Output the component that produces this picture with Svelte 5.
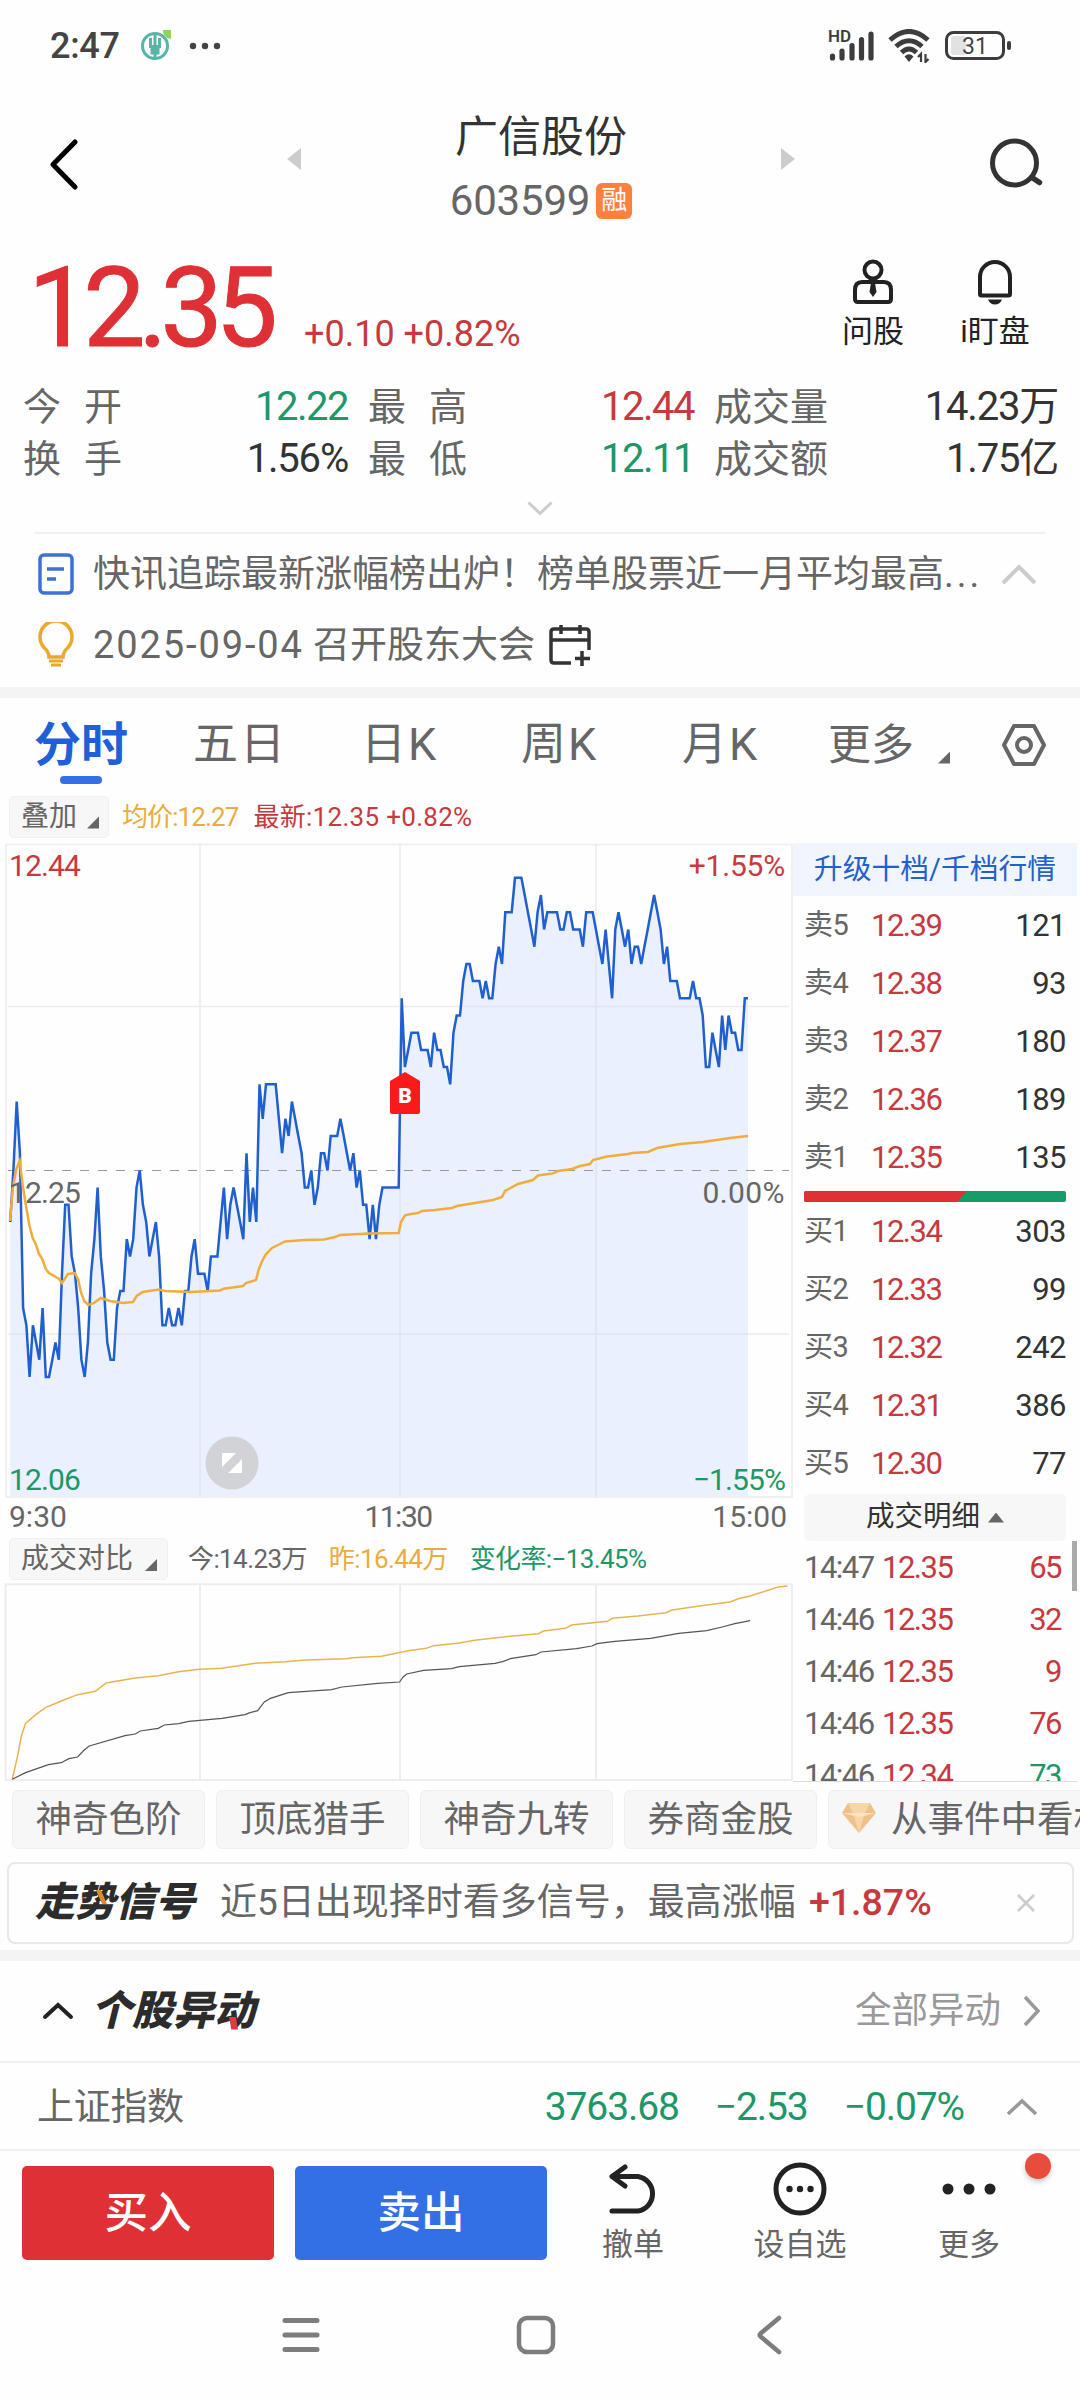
<script lang="ts">
  type Level = { name: string; price: string; volume: number };
  type Deal = { time: string; price: string; volume: number; down?: boolean };

  const tabs = ['分时', '五日', '日K', '周K', '月K'];
  let activeTab = $state('分时');

  const quotes = [
    { label: '今开', value: '12.22', tone: 'green' },
    { label: '最高', value: '12.44', tone: 'red' },
    { label: '成交量', value: '14.23万', tone: 'dark' },
    { label: '换手', value: '1.56%', tone: 'dark' },
    { label: '最低', value: '12.11', tone: 'green' },
    { label: '成交额', value: '1.75亿', tone: 'dark' }
  ];

  const asks: Level[] = [
    { name: '卖5', price: '12.39', volume: 121 },
    { name: '卖4', price: '12.38', volume: 93 },
    { name: '卖3', price: '12.37', volume: 180 },
    { name: '卖2', price: '12.36', volume: 189 },
    { name: '卖1', price: '12.35', volume: 135 }
  ];

  const bids: Level[] = [
    { name: '买1', price: '12.34', volume: 303 },
    { name: '买2', price: '12.33', volume: 99 },
    { name: '买3', price: '12.32', volume: 242 },
    { name: '买4', price: '12.31', volume: 386 },
    { name: '买5', price: '12.30', volume: 77 }
  ];

  const deals: Deal[] = [
    { time: '14:47', price: '12.35', volume: 65 },
    { time: '14:46', price: '12.35', volume: 32 },
    { time: '14:46', price: '12.35', volume: 9 },
    { time: '14:46', price: '12.35', volume: 76 },
    { time: '14:46', price: '12.34', volume: 73, down: true }
  ];

  const tools = ['神奇色阶', '顶底猎手', '神奇九转', '券商金股'];

  // minute prices as cents away from the previous close (12.25)
  const morning = [
    -3, 0, 4, 1, -8, -9, -12, -9, -10, -11, -8, -12, -12, -11, -10, -11, -6, -2, -2, -5,
    -6, -8, -11, -12, -10, -6, -4, -1, -5, -7, -10, -11, -11, -8, -7, -7, -4, -5, -4, -1,
    0, -2, -3, -5, -4, -3, -5, -9, -9, -8, -9, -9, -8, -9, -7, -7, -5, -4, -6, -6,
    -6, -7, -5, -5, -5, -3, -1, -4, -2, -1, -2, -3, -4, 1, -3, -1, -3, 5, 3, 5,
    5, 5, 5, 3, 1, 3, 2, 4, 3, 2, 1, -1, -1, 0, -2, -1, 1, 1, 0, 2,
    2, 2, 3, 2, 1, 0, 1, -1, 0, -2, -2, -4, -2, -4, -2, -1, -1, -1, -1, -1, -1
  ];
  const afternoon = [
    10, 6, 7, 8, 8, 8, 7, 7, 7, 6, 8, 7, 7, 6, 6, 5, 8, 9, 9, 11,
    12, 12, 11, 11, 11, 10, 11, 10, 10, 12, 13, 12, 15, 15, 15, 17, 17, 17, 16, 15,
    14, 13, 15, 16, 14, 15, 15, 15, 15, 14, 14, 15, 15, 14, 14, 14, 13, 15, 15, 15,
    14, 13, 12, 14, 12, 10, 14, 15, 14, 13, 14, 12, 13, 13, 12, 13, 14, 15, 16, 15,
    14, 12, 13, 11, 11, 11, 10, 10, 10, 10, 11, 10, 10, 9, 6, 6, 8, 7, 6, 9,
    7, 9, 8, 8, 7, 7, 10, 10
  ];

  function place(values: number[], from: number, to: number) {
    const step = (to - from) / (values.length - 1);
    return values.map((v, i) => `${(from + i * step).toFixed(1)},${(327.4 - v * 17.21).toFixed(1)}`);
  }

  const priceLine = [...place(morning, 10.2, 398.7), ...place(afternoon, 401.7, 748)].join(' ');
  const priceArea = `10.2,654 ${priceLine} 748,654`;

  const averageLine =
    '10,378 12.7,346 16,327 19.7,318 22.7,342 26,363 29.3,382 32.7,395 35.7,401 39,411 42.3,416 45.7,426 49,430 55,433.5 59,436 62,440 68,431 74.7,430 78,436 81,449.5 84.3,458 88.3,462 94,460 100.7,455 110,458 123,460 133,459 136.7,453 142.7,449 159,446.5 165,448 191,449 220,447.4 223.7,445.7 243,443 246,440 256,437 259,425.5 262.7,417 265.7,411.6 272,405 279,401.5 285,398.5 305,397 324,396.4 334,394.3 340,392 369,390.5 398.7,390 401,379 405,372.4 411,371 418,370 422,368 435,367 452,365 457,363 493,357 502,354 505,348 518,341 533,337 538,332.5 553,330.4 558,328 572,326 580,323 590,321 593,317 607,313.5 628,311 632,310 648,309 657,305 680,301 703,299 730,295 748,293';

  const yesterdayVolume =
    '24,900 33,840 42,770 50,732 70,706 90,684 120,665 152,646 187,636 208,611 265,596 310,589 350,577 390,570 435,567 500,552 560,547 600,542 680,538 690,535 748,531 800,514 835,507 850,499 900,491 930,483 1000,471 1055,463 1065,455 1108,447 1120,437 1190,426 1200,417 1250,410 1305,400 1315,393 1370,380 1430,368 1450,357 1470,350 1525,323 1543,320';
  const todayVolume =
    '24,900 50,880 95,856 120,850 135,838 152,833 165,812 175,800 245,769 265,764 275,755 310,747 322,737 350,733 370,726 435,717 480,706 490,700 505,694 518,668 530,657 565,640 650,631 670,623 740,612 783,608 790,593 797,584 830,573 885,568 900,562 970,552 985,547 1000,538 1050,526 1060,518 1130,508 1160,500 1170,493 1205,486 1275,477 1330,462 1385,454 1415,443 1440,433 1470,424';
</script>

<div class="screen">
  <header class="status">
    <span class="clock">2:47</span>
    <svg class="app-mark" width="32" height="34" viewBox="0 0 32 34" fill="none">
      <circle cx="14" cy="19" r="12.500" stroke="#56b5a8" stroke-width="3" />
      <path d="M14 8v23M9.500 11v8.500h9V11M9.500 24.500h9M11 20v6h6v-6" stroke="#56b5a8" stroke-width="3" />
      <path d="M22 3h8v9q-8-1-8-9z" fill="#8bd455" />
    </svg>
    <svg width="32" height="8" viewBox="0 0 32 8" fill="#444">
      <circle cx="4" cy="4" r="3.200" /><circle cx="16" cy="4" r="3.200" /><circle cx="28" cy="4" r="3.200" />
    </svg>
    <div class="signals">
      <div class="cell">
        <span class="hd">HD</span>
        <svg width="47" height="32" viewBox="0 0 47 32" stroke="#3d3d3d" stroke-width="5.200" stroke-linecap="round">
          <path d="M4.500 28v-2M14 28v-7M24 28V15.500M33.500 28V9.500M43 28V4" />
        </svg>
      </div>
      <svg width="44" height="34" viewBox="0 0 44 34" fill="none" stroke="#3d3d3d" stroke-width="5">
        <path d="M2 11Q21-6 40 11M8 17.500Q21 6 34 17.500M13.500 23.500Q21 16.500 28.500 23.500" />
        <path d="M16.500 27.500Q21 23 25.500 27.500L21 33z" fill="#3d3d3d" stroke="none" />
        <path d="M33 33v-8l-3 3M37.500 25v8l3-3" stroke-width="2.200" />
      </svg>
      <svg width="68" height="30" viewBox="0 0 68 30" fill="none">
        <rect x="6" y="5" width="15" height="19" rx="3" fill="#e2e2e2" />
        <rect x="1.500" y="1.500" width="57" height="26" rx="7" stroke="#3d3d3d" stroke-width="3" />
        <rect x="62" y="10" width="4" height="9" rx="2" fill="#3d3d3d" />
        <text x="30" y="22.800" text-anchor="middle" class="battery-text">31</text>
      </svg>
    </div>
  </header>

  <nav class="topbar">
    <svg class="back" width="30" height="52" viewBox="0 0 30 52" fill="none" stroke="#000" stroke-width="5" stroke-linecap="round" stroke-linejoin="round">
      <path d="M26 4L4 26.500 26 49" />
    </svg>
    <svg class="prev" width="14" height="22" viewBox="0 0 14 22"><path d="M0 11L14 0v22z" fill="#ccc" /></svg>
    <div class="title">
      <h1>广信股份</h1>
      <div class="code">603599<span class="badge">融</span></div>
    </div>
    <svg class="next" width="14" height="22" viewBox="0 0 14 22"><path d="M14 11L0 0v22z" fill="#ccc" /></svg>
    <svg class="search" width="54" height="50" viewBox="0 0 54 50" fill="none" stroke="#333" stroke-width="5" stroke-linecap="round">
      <circle cx="25.500" cy="25" r="22" />
      <path d="M43 39.500l7.500 5" stroke-width="5.500" />
    </svg>
  </nav>

  <section class="headline">
    <span class="price">12.35</span>
    <span class="change">+0.10 +0.82%</span>
    <div class="action ask">
      <svg width="42" height="46" viewBox="0 0 42 46" fill="none" stroke="#222" stroke-width="4">
        <circle cx="21" cy="11" r="8.500" />
        <path d="M10 23h22q7 0 7 8v9q0 3-3 3H6q-3 0-3-3v-9q0-8 7-8z" />
        <path d="M19 24h4l1.500 9-3.500 5-3.500-5z" fill="#222" stroke="none" />
      </svg>
      <span>问股</span>
    </div>
    <div class="action watch">
      <svg width="42" height="46" viewBox="0 0 42 46" fill="none" stroke="#222" stroke-width="4">
        <path d="M6 35V18a15 15 0 0 1 30 0v17q0 1.500-1.500 1.500h-27Q6 36.500 6 35z" />
        <path d="M14 40.500h14q-2 5-7 5t-7-5z" fill="#222" stroke="none" />
      </svg>
      <span>i盯盘</span>
    </div>
  </section>

  <section class="quotes">
    {#each quotes as quote}
      <div class="quote">
        <span class="label" class:wide={quote.label.length === 2}>{quote.label}</span>
        <span class={quote.tone}>{quote.value}</span>
      </div>
    {/each}
  </section>

  <div class="expand">
    <svg width="26" height="15" viewBox="0 0 26 15" fill="none" stroke="#ccc" stroke-width="3"><path d="M1.500 1.500L13 12.500 24.500 1.500" /></svg>
  </div>

  <section class="news">
    <div class="news-row">
      <svg width="36" height="42" viewBox="0 0 36 42" fill="none" stroke="#3d70dc" stroke-width="3.500">
        <rect x="2" y="2" width="32" height="38" rx="4" />
        <path d="M9 16h17M9 26h9" />
      </svg>
      <p>快讯追踪最新涨幅榜出炉！榜单股票近一月平均最高<span class="dots">...</span></p>
      <svg class="fold" width="36" height="22" viewBox="0 0 36 22" fill="none" stroke="#ccc" stroke-width="4"><path d="M2 20L18 4l16 16" /></svg>
    </div>
    <div class="news-row second">
      <svg width="36" height="46" viewBox="0 0 36 46" fill="none" stroke="#eaa82f" stroke-width="3.500">
        <path d="M11 35Q11 30 6 25.500a16 16 0 1 1 24 0Q25 30 25 35z" />
        <path d="M11 39h14M13 43h10" stroke-width="3" />
      </svg>
      <p><span class="date">2025-09-04</span> 召开股东大会</p>
      <svg width="42" height="42" viewBox="0 0 42 42" fill="none" stroke="#333" stroke-width="3.500">
        <path d="M22 39H5q-3 0-3-3V8q0-3 3-3h32q3 0 3 3v18M2 16h38M12 1v9M31 1v9M33 27v15M26 34.500h15" />
      </svg>
    </div>
  </section>

  <div class="band"></div>

  <div class="tabs">
    {#each tabs as tab}
      <button class="tab" class:active={tab === activeTab} onclick={() => (activeTab = tab)}>{tab}</button>
    {/each}
    <button class="tab more">更多<i class="corner"></i></button>
    <svg width="46" height="44" viewBox="0 0 46 44" fill="none" stroke="#666" stroke-width="4">
      <path d="M13 3h20L43 22 33 41H13L3 22z" stroke-linejoin="round" />
      <circle cx="23" cy="22" r="7" />
    </svg>
  </div>

  <section class="market">
    <div class="charts">
      <div class="legend">
        <button class="chip">叠加<i class="corner"></i></button>
        <span class="orange average">均价:12.27</span>
        <span class="red latest">最新:12.35 +0.82%</span>
      </div>

      <div class="chart">
        <svg width="793" height="656" viewBox="0 0 793 656" fill="none">
          <polygon points={priceArea} fill="#eaf0fe" />
          <path d="M6 1.500h786M6 654h786M6 1v654M792 1v654" stroke="#f0f0f0" stroke-width="2" />
          <path d="M8 163.500h781M8 491h781M200 1v653M400 1v653M596 1v653" stroke="#d5d9e3" stroke-opacity=".5" stroke-width="1.500" />
          <path d="M8 327.500h781" stroke="#999" stroke-width="1.200" stroke-dasharray="9 9" />
          <polyline points={priceLine} stroke="#1f5fcf" stroke-width="2.500" />
          <polyline points={averageLine} stroke="#f0ad3c" stroke-width="2.500" />
        </svg>
        <span class="mark top-left red">12.44</span>
        <span class="mark top-right red">+1.55%</span>
        <span class="mark mid-left">12.25</span>
        <span class="mark mid-right">0.00%</span>
        <span class="mark bottom-left green">12.06</span>
        <span class="mark bottom-right green">−1.55%</span>
        <svg class="flag" width="30" height="42" viewBox="0 0 30 42">
          <path d="M0 9L15 0l15 9v31q0 2-2 2H2q-2 0-2-2z" fill="#fa1a1a" />
          <text x="15" y="31" text-anchor="middle">B</text>
        </svg>
        <svg class="rotate" width="54" height="54" viewBox="0 0 54 54">
          <circle cx="27" cy="27" r="26.500" fill="#d2d3d6" />
          <path d="M17 17h14L17 31zM37 23v14H23z" fill="#fff" />
        </svg>
      </div>

      <div class="times"><span>9:30</span><span>11:30</span><span>15:00</span></div>

      <div class="legend compare">
        <button class="chip">成交对比<i class="corner"></i></button>
        <span class="gray">今:14.23万</span>
        <span class="orange">昨:16.44万</span>
        <span class="green">变化率:−13.45%</span>
      </div>

      <svg class="volume" width="793" height="200" viewBox="0 311 1554 600" preserveAspectRatio="none" fill="none">
        <path d="M10 315H1552M10 902H1552M11 315V902M1552 315V902M392 315V902M784 315V902M1168 315V902" stroke="#ededed" stroke-width="2" vector-effect="non-scaling-stroke" />
        <polyline points={yesterdayVolume} stroke="#e8b44e" stroke-width="1.500" vector-effect="non-scaling-stroke" />
        <polyline points={todayVolume} stroke="#555" stroke-width="1.200" vector-effect="non-scaling-stroke" />
      </svg>
    </div>

    <aside class="book">
      <div class="upgrade">升级十档/千档行情</div>
      {#each asks as level}
        <div class="level"><span>{level.name}</span><b>{level.price}</b><em>{level.volume}</em></div>
      {/each}
      <svg class="ratio" width="262" height="11" viewBox="0 0 262 11">
        <rect width="262" height="11" rx="2" fill="#149c69" />
        <path d="M2 0H163L153 11H2Q0 11 0 9V2Q0 0 2 0z" fill="#df3036" />
      </svg>
      {#each bids as level}
        <div class="level"><span>{level.name}</span><b>{level.price}</b><em>{level.volume}</em></div>
      {/each}
      <button class="details">成交明细<i></i></button>
      <div class="deals">
        {#each deals as deal}
          <div class="deal"><span>{deal.time}</span><b>{deal.price}</b><em class:green={deal.down}>{deal.volume}</em></div>
        {/each}
        <div class="thumb"></div>
      </div>
    </aside>
  </section>

  <div class="tools">
    {#each tools as tool}
      <button>{tool}</button>
    {/each}
    <button class="event">
      <svg width="34" height="30" viewBox="0 0 34 30">
        <path d="M6 0h22l6 10-17 20L0 10z" fill="#f0c08a" />
        <path d="M6 0h22l-5 10H11zM11 10h12l-6 20z" fill="#f8d5a8" />
        <path d="M0 10h34L17 14z" fill="#fbe3c3" />
      </svg>
      从事件中看机会
    </button>
  </div>

  <div class="trend">
    <div class="wordmark">走势信号<i class="spark"></i></div>
    <p>近5日出现择时看多信号，最高涨幅 <strong>+1.87%</strong></p>
    <svg width="18" height="18" viewBox="0 0 18 18" stroke="#ccc" stroke-width="2.500"><path d="M1 1l16 16M17 1L1 17" /></svg>
  </div>

  <div class="band"></div>

  <div class="moves">
    <svg width="32" height="18" viewBox="0 0 32 18" fill="none" stroke="#222" stroke-width="4" stroke-linecap="round"><path d="M3 15L16 3l13 12" /></svg>
    <div class="wordmark">个股异动<i class="spark"></i></div>
    <span>全部异动</span>
    <svg width="18" height="32" viewBox="0 0 18 32" fill="none" stroke="#999" stroke-width="3.500"><path d="M2 2l13 14L2 30" /></svg>
  </div>

  <div class="index">
    <span class="name">上证指数</span>
    <span>3763.68</span>
    <span>−2.53</span>
    <span>−0.07%</span>
    <svg width="32" height="18" viewBox="0 0 32 18" fill="none" stroke="#999" stroke-width="3.500"><path d="M2 16L16 3l14 13" /></svg>
  </div>

  <footer class="trade">
    <button class="buy">买入</button>
    <button class="sell">卖出</button>
    <div class="item cancel">
      <svg width="54" height="54" viewBox="0 0 54 54" fill="none" stroke="#222" stroke-width="5" stroke-linecap="round" stroke-linejoin="round">
        <path d="M19 5L6 14.500l13 9.500M6 14.500h26a17.500 17.500 0 0 1 0 34.500H6" />
      </svg>
      <span>撤单</span>
    </div>
    <div class="item pick">
      <svg width="54" height="54" viewBox="0 0 54 54" fill="#222">
        <circle cx="27" cy="27" r="24" fill="none" stroke="#222" stroke-width="5" />
        <circle cx="16.500" cy="27" r="3.200" /><circle cx="27" cy="27" r="3.200" /><circle cx="37.500" cy="27" r="3.200" />
      </svg>
      <span>设自选</span>
    </div>
    <div class="item rest">
      <svg width="54" height="54" viewBox="0 0 54 54" fill="#222">
        <circle cx="6" cy="27" r="5.500" /><circle cx="27" cy="27" r="5.500" /><circle cx="48" cy="27" r="5.500" />
      </svg>
      <span>更多</span>
      <i class="dot"></i>
    </div>
  </footer>

  <div class="system">
    <svg width="38" height="36" viewBox="0 0 38 36" stroke="#7d7d7d" stroke-width="5" stroke-linecap="round"><path d="M3 3.500h32M3 18h32M3 32.500h32" /></svg>
    <svg class="home" width="40" height="40" viewBox="0 0 40 40" fill="none" stroke="#7d7d7d" stroke-width="4.500"><rect x="3" y="3" width="34" height="34" rx="8" /></svg>
    <svg width="26" height="40" viewBox="0 0 26 40" fill="none" stroke="#7d7d7d" stroke-width="4.500" stroke-linecap="round" stroke-linejoin="round"><path d="M23 3L4.500 18.500q-1.500 1.500 0 3L23 37" /></svg>
  </div>
</div>

<style>
  :global(body) {
    margin: 0;
    background: #fff;
  }

  .screen {
    width: 1080px;
    height: 2400px;
    overflow: hidden;
    background: #fefefe;
    color: #666;
    font-family: Roboto, 'Noto Sans CJK SC', sans-serif;
    line-height: 1;
    white-space: nowrap;
  }

  .screen * {
    box-sizing: border-box;
  }

  svg {
    display: block;
    flex: none;
  }

  button {
    margin: 0;
    padding: 0;
    border: 0;
    background: none;
    color: inherit;
    font: inherit;
    white-space: nowrap;
  }

  h1,
  p {
    margin: 0;
    font-weight: 400;
  }

  b,
  em {
    font-weight: 400;
    font-style: normal;
  }

  .red { color: #c63a3f; }
  .green { color: #1d9768; }
  .orange { color: #e9ac40; }
  .dark { color: #333; }
  .gray { color: #666; }

  .status {
    display: flex;
    align-items: center;
    height: 92px;
    padding: 0 67px 0 50px;
  }

  .clock {
    width: 90px;
    color: #444;
    font-size: 36px;
    font-weight: 500;
    letter-spacing: -0.3px;
  }

  .app-mark {
    margin: -4px 16px 0 1px;
  }

  .signals {
    display: flex;
    align-items: center;
    gap: 13px;
    margin-left: auto;
  }

  .cell {
    position: relative;
  }

  .hd {
    position: absolute;
    left: 0;
    top: -2px;
    color: #3d3d3d;
    font-size: 17px;
    font-weight: 600;
  }

  .battery-text {
    fill: #444;
    font-size: 23px;
  }

  .topbar {
    display: flex;
    align-items: center;
    height: 148px;
    padding: 0 37px 0 49px;
  }

  .back {
    margin: -4px 208px 0 0;
  }

  .prev,
  .next {
    margin-top: -14px;
  }

  .title {
    flex: 1;
    display: flex;
    flex-direction: column;
    align-items: center;
    gap: 21px;
    padding-top: 6px;
  }

  h1 {
    color: #333;
    font-size: 43px;
  }

  .code {
    display: flex;
    align-items: center;
    gap: 6px;
    font-size: 42px;
    letter-spacing: -0.2px;
  }

  .badge {
    width: 36px;
    height: 36px;
    border-radius: 6px;
    background: #ff7f3f;
    color: #fff;
    font-size: 26px;
    line-height: 35px;
    text-align: center;
  }

  .search {
    margin: -6px 0 0 194px;
  }

  .headline {
    display: flex;
    height: 140px;
    padding-left: 28px;
  }

  .price {
    width: 276px;
    padding-top: 13px;
    color: #df3036;
    font-size: 111px;
    -webkit-text-stroke: 1px #df3036;
    letter-spacing: -7.200px;
  }

  .change {
    padding-top: 76px;
    color: #c63a3f;
    font-size: 36px;
  }

  .action {
    display: flex;
    flex-direction: column;
    align-items: center;
    width: 122px;
    padding-top: 19px;
    color: #222;
    font-size: 31px;
  }

  .action span {
    margin-top: 11px;
  }

  .ask {
    margin-left: auto;
  }

  .watch {
    margin-right: 24px;
  }

  .quotes {
    display: grid;
    grid-template-columns: 325px 326px 344px;
    grid-auto-rows: 52px;
    column-gap: 20px;
    height: 104px;
    padding: 1px 0 0 23px;
  }

  .quote {
    display: flex;
    justify-content: space-between;
    align-items: center;
    font-size: 40px;
    letter-spacing: -1.5px;
  }

  .quote .dark {
    letter-spacing: -1.2px;
  }

  .quote .label {
    font-size: 38px;
    letter-spacing: 0;
  }

  .quote .label.wide {
    letter-spacing: 23px;
  }

  .expand {
    display: flex;
    justify-content: center;
    align-items: center;
    height: 48px;
  }

  .news {
    height: 155px;
    margin: 0 35px;
    border-top: 2px solid #f0f0f0;
    font-size: 37px;
  }

  .news-row {
    display: flex;
    align-items: center;
    height: 70px;
    margin-top: 5px;
    padding-left: 3px;
  }

  .news-row.second {
    height: 72px;
    margin-top: 0;
  }

  .news-row p {
    margin: 0 14px 0 19px;
  }

  .dots {
    letter-spacing: 3px;
  }

  .date {
    font-size: 38px;
    letter-spacing: 1.900px;
  }

  .fold {
    margin-left: auto;
    margin-right: 8px;
  }

  .band {
    height: 11px;
    background: #f4f4f4;
  }

  .tabs {
    display: grid;
    grid-template-columns: 159px 168px 160px 161px 146px 1fr auto;
    align-items: center;
    height: 93px;
    padding: 1px 33px 1px 34px;
    font-size: 45px;
  }

  .tab {
    position: relative;
    height: 91px;
    text-align: left;
    line-height: 92px;
    letter-spacing: 2px;
  }

  .tab.active {
    color: #1f5fd8;
    font-size: 47px;
    font-weight: 700;
    letter-spacing: 0;
  }

  .tab.active::after {
    content: '';
    position: absolute;
    left: 26px;
    bottom: 6px;
    width: 42px;
    height: 8px;
    border-radius: 4px;
    background: #3370e6;
  }

  .tab.more {
    display: flex;
    align-items: center;
    font-size: 43px;
    letter-spacing: 0;
  }

  .corner {
    width: 12px;
    height: 12px;
    background: #666;
    clip-path: polygon(100% 0, 100% 100%, 0 100%);
  }

  .tab.more .corner {
    margin: 26px 0 0 24px;
  }

  .market {
    display: flex;
    height: 992px;
  }

  .charts {
    width: 793px;
  }

  .legend {
    display: flex;
    align-items: center;
    height: 52px;
    padding: 0 0 1px 9px;
    font-size: 26px;
    letter-spacing: -0.5px;
  }

  .chip {
    display: flex;
    align-items: center;
    height: 42px;
    margin-right: 13px;
    padding: 0 9px 0 11px;
    border: 1px solid #f0f0f0;
    border-radius: 5px;
    background: #f7f7f7;
    font-size: 28px;
    letter-spacing: 0;
  }

  .chip .corner {
    margin: 12px 0 0 10px;
  }

  .average {
    letter-spacing: -0.9px;
  }

  .latest {
    margin-left: 15px;
    letter-spacing: 0.3px;
  }

  .chart {
    position: relative;
    height: 655px;
  }

  .mark {
    position: absolute;
    font-size: 30px;
    letter-spacing: -0.9px;
  }

  .top-left { left: 9px; top: 8px; }
  .top-right { right: 8px; top: 8px; }
  .mid-left { left: 9px; top: 335px; }
  .mid-right { right: 8px; top: 335px; }
  .bottom-left { left: 9px; top: 622px; }
  .bottom-right { right: 8px; top: 622px; }

  .top-right {
    letter-spacing: -0.2px;
  }

  .mid-right {
    letter-spacing: 0.4px;
  }

  .flag {
    position: absolute;
    left: 390px;
    top: 229px;
  }

  .flag text {
    fill: #fff;
    font-size: 21px;
    font-weight: 900;
  }

  .rotate {
    position: absolute;
    left: 205px;
    top: 593px;
  }

  .times {
    display: grid;
    grid-template-columns: 1fr auto 1fr;
    height: 37px;
    padding: 4px 6px 0 9px;
    font-size: 30px;
    letter-spacing: 0;
  }

  .times span:nth-child(2) {
    letter-spacing: -1.500px;
  }

  .times span:last-child {
    text-align: right;
  }

  .compare {
    height: 48px;
    padding-bottom: 0;
    gap: 22px;
    letter-spacing: -0.6px;
  }

  .compare .chip {
    margin-right: -2px;
    padding: 0 10px 0 11px;
  }

  .compare .chip .corner {
    margin-left: 12px;
  }

  .book {
    width: 287px;
    padding: 0 14px 0 11px;
  }

  .upgrade {
    height: 53px;
    margin: 52px -11px 0;
    background: #f1f6fe;
    color: #2460cc;
    font-size: 28.800px;
    line-height: 53px;
    text-align: center;
  }

  .level,
  .deal {
    display: flex;
    align-items: center;
    height: 58px;
    font-size: 31px;
    letter-spacing: -1.5px;
  }

  .level span {
    width: 67px;
    font-size: 29px;
    letter-spacing: -0.5px;
  }

  .level b,
  .deal b {
    color: #c63a3f;
  }

  .level em {
    margin-left: auto;
    color: #333;
    letter-spacing: -0.5px;
  }

  .ratio {
    margin: 5px 0 0;
  }

  .details {
    display: flex;
    justify-content: center;
    align-items: center;
    width: 262px;
    height: 47px;
    margin-top: 2px;
    border-radius: 6px;
    background: #f7f7f7;
    color: #333;
    font-size: 28.500px;
  }

  .details i {
    width: 16px;
    height: 10px;
    margin-left: 8px;
    background: #666;
    clip-path: polygon(50% 0, 100% 100%, 0 100%);
  }

  .deals {
    position: relative;
    height: 241px;
    margin: 0 -11px;
    padding: 0 16px 0 11px;
    border-bottom: 1px solid #ddd;
    overflow: hidden;
  }

  .deal {
    height: 52px;
  }

  .deal span {
    width: 78px;
  }

  .deal em {
    margin-left: auto;
    color: #c63a3f;
  }

  .deal em.green {
    color: #1d9768;
  }

  .thumb {
    position: absolute;
    right: 0;
    top: 0;
    width: 5px;
    height: 50px;
    background: #aaa;
  }

  .tools {
    display: flex;
    gap: 11px;
    height: 77px;
    padding: 7px 0 0 12px;
    overflow: hidden;
  }

  .tools button {
    flex: none;
    width: 193px;
    height: 59px;
    padding-top: 2px;
    border: 1px solid #efefef;
    border-radius: 6px;
    background: #f7f7f7;
    font-size: 36.500px;
  }

  .tools .event {
    display: flex;
    align-items: center;
    gap: 15px;
    width: 320px;
    padding-left: 13px;
  }

  .event svg {
    margin-top: -6px;
  }

  .trend {
    display: flex;
    align-items: center;
    height: 82px;
    margin: 2px 6px 6px 7px;
    padding: 0 37px 0 26px;
    border: 2px solid #e8e8e8;
    border-radius: 8px;
    font-size: 37px;
  }

  .wordmark {
    position: relative;
    color: #2c2c2c;
    font-size: 40px;
    font-style: italic;
    font-weight: 900;
  }

  .spark {
    position: absolute;
    left: 61px;
    top: 7px;
    width: 11px;
    height: 14px;
    background: #e08a30;
    clip-path: polygon(0 0, 45% 0, 100% 100%, 55% 100%);
  }

  .trend p {
    margin-left: 25px;
  }

  .trend strong {
    margin-left: 4px;
    color: #c63a3f;
    font-size: 37.500px;
    font-weight: 500;
  }

  .trend svg {
    margin-left: auto;
  }

  .moves {
    display: flex;
    align-items: center;
    height: 102px;
    padding: 0 39px 0 42px;
    border-bottom: 2px solid #f0f0f0;
    color: #999;
    font-size: 36.500px;
  }

  .moves .wordmark {
    margin: 0 auto 0 17px;
    font-size: 41px;
  }

  .moves .spark {
    left: 138px;
    top: 26px;
    width: 9px;
    height: 13px;
    background: #df3a3f;
    clip-path: polygon(0 0, 75% 0, 100% 100%, 25% 100%);
  }

  .moves > span {
    margin-right: 22px;
  }

  .index {
    display: flex;
    align-items: center;
    gap: 36px;
    height: 88px;
    padding: 2px 42px 0 37px;
    border-bottom: 2px solid #f0f0f0;
    color: #1d9768;
    font-size: 39px;
    letter-spacing: -1.1px;
  }

  .index .name {
    margin-right: auto;
    color: #666;
    font-size: 37px;
    letter-spacing: -0.3px;
  }

  .index svg {
    margin-left: 6px;
  }

  .trade {
    display: flex;
    height: 112px;
    padding: 15px 0 0 22px;
  }

  .trade button {
    width: 252px;
    height: 94px;
    margin-right: 21px;
    padding-top: 2px;
    border-radius: 5px;
    color: #fff;
    font-size: 43.500px;
    font-weight: 500;
  }

  .buy { background: #df3036; }
  .sell { background: #3370e6; }

  .item {
    position: relative;
    display: flex;
    flex-direction: column;
    align-items: center;
    width: 126px;
    margin-top: -4px;
    font-size: 31px;
  }

  .item span {
    margin-top: 13px;
  }

  .cancel {
    margin-left: 2px;
  }

  .pick {
    margin-left: 41px;
  }

  .rest {
    margin-left: 43px;
  }

  .dot {
    position: absolute;
    left: 119px;
    top: -9px;
    width: 26px;
    height: 26px;
    border-radius: 50%;
    background: #e74c3c;
    box-shadow: 0 3px 5px rgba(0, 0, 0, 0.2);
  }

  .system {
    display: flex;
    align-items: center;
    justify-content: space-between;
    height: 143px;
    padding: 0 298px 0 282px;
  }

  .home {
    margin-right: 4px;
  }
</style>
